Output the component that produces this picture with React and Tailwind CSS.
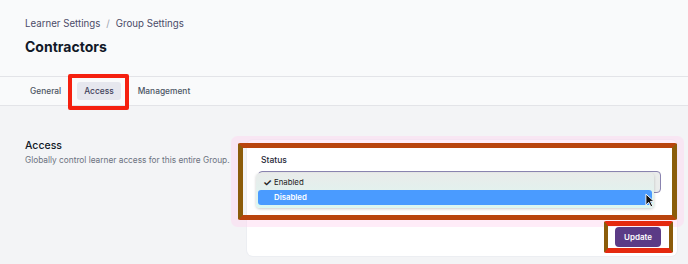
import React from 'react';

const Cursor = () => (
  <svg width="10" height="15" viewBox="0 0 11 16" className="absolute left-[386px] top-[21px]">
    <path d="M1 1 L1 13 L4 10 L6.5 15 L8.5 14 L6 9 L10 9 Z" fill="#111" stroke="#fff" strokeWidth="1" />
  </svg>
);

const App = () => {
  return (
    <div className="w-full h-[264px] overflow-hidden bg-[#f3f4f6] font-['Inter',sans-serif] text-[#111827]">
      {/* header */}
      <div className="h-[77px] bg-[#f9fafb] border-b border-[#e3e4e8] px-[25px] pt-[17px]">
        <div className="flex items-center gap-[6px] text-[9.7px] leading-[14px] text-[#4b4b68]">
          <span>Learner Settings</span>
          <span className="text-[#9ca3af]">/</span>
          <span>Group Settings</span>
        </div>
        <h1 className="mt-[7px] text-[14px] leading-[18px] font-bold">Contractors</h1>
      </div>

      {/* tabs */}
      <div className="h-[29px] bg-[#f9fafb] border-b border-[#e3e4e8] flex items-center pl-[30px] text-[8.4px] font-medium text-[#4b5563]">
        <span>General</span>
        <span className="relative ml-[16px] px-[7px] h-[18px] flex items-center rounded-[3px] bg-[#e6e7ee] text-[#3f3f5a]">
          Access
          <span className="absolute left-[-9px] right-[-8px] top-[-8px] bottom-[-10px] border-[4px] border-[#f5200f] rounded-[2px]" />
        </span>
        <span className="ml-[17px]">Management</span>
      </div>

      {/* content */}
      <div className="flex pl-[25px] pr-[11px] pt-[34px]">
        <div className="w-[210px]">
          <h2 className="text-[10.5px] leading-[12px] font-medium">Access</h2>
          <p className="mt-[3px] text-[8.3px] leading-[11px] text-[#6b7280] whitespace-nowrap">
            Globally control learner access for this entire Group.
          </p>
        </div>

        <div className="relative ml-auto w-[430px] h-[116px] bg-white rounded-[6px] shadow-[0_0_0_1px_#eceef2] pl-[11px] pr-[16px] pt-[14px]">
          {/* pink glow + brown annotation */}
          <span className="absolute left-[-9px] top-[3px] w-[439px] h-[77px] border-[5px] border-x-[#8b5c0a] border-y-[#b9440d] rounded-[2px] shadow-[0_0_0_7px_rgba(255,212,240,0.45)]" />

          <div className="relative pl-[3px] text-[8.5px] leading-[12px] font-medium text-[#1f2937]">Status</div>
          <div className="relative mt-[5px] h-[22px] rounded-[4px] border border-[#8a84b0] bg-[#eaeceb]">
            {/* open native list */}
            <div className="absolute left-[-3px] top-[1px] w-[398px] h-[35px] rounded-[4px] bg-[linear-gradient(#e9ebea,#dcf7f1)] shadow-[0_1px_3px_rgba(0,0,0,0.2)] px-[2px] pt-[2px] text-[7.8px] leading-[15px]">
              <div className="flex items-center h-[15px] pl-[5px] text-[#222]">
                <span className="w-[11px] text-[10px] font-bold leading-[15px]">✓</span>
                <span>Enabled</span>
              </div>
              <div className="flex items-center h-[15px] pl-[16px] rounded-[3px] bg-[#4a9bff] text-white font-semibold">
                Disabled
              </div>
            </div>
            <Cursor />
          </div>

          <div className="flex justify-end mt-[34px]">
            <button className="relative h-[20px] w-[46px] rounded-[4px] bg-[#5b3b86] text-white text-[8px] font-semibold">
              Update
              <span className="absolute left-[-11px] top-[-6px] w-[69px] h-[32px] border-x-[4px] border-y-[5px] border-x-[#8b5c0a] border-y-[#e5290f] rounded-[2px]" />
            </button>
          </div>
        </div>
      </div>
    </div>
  );
};

export default App;
